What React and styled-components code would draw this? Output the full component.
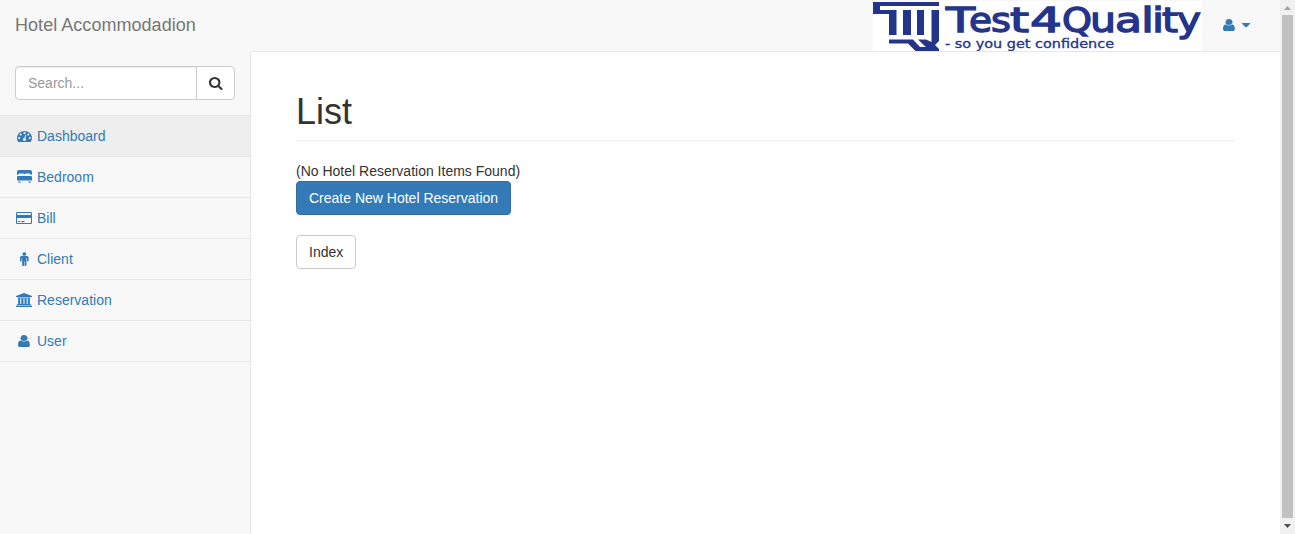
import React from "react";
import styled, { createGlobalStyle } from "styled-components";

const Global = createGlobalStyle`
  *, *::before, *::after { box-sizing: border-box; }
  html, body { margin: 0; height: 100%; overflow: hidden; }
  body {
    font: 14px/20px "Liberation Sans", Arial, sans-serif;
    color: #333;
    background: #f8f8f8;
  }
`;

const Screen = styled.div`
  display: flex;
  height: 534px;
`;
const Page = styled.div`
  flex: 1;
  min-width: 0;
  display: flex;
  flex-direction: column;
`;
const Navbar = styled.header`
  flex: none;
  display: flex;
  height: 51px;
  justify-content: space-between;
`;
const Brand = styled.a`
  padding: 15px;
  font-size: 18px;
  line-height: 20px;
  letter-spacing: 0.04px;
  color: #777;
`;
const NavRight = styled.div`
  display: flex;
  align-items: flex-start;
  padding-right: 15px;
`;
const LogoSvg = styled.svg`
  display: block;
  width: 329px;
  height: 50px;
  margin-top: 1px;
  background: #fff;
`;
const UserMenu = styled.a`
  display: flex;
  align-items: center;
  gap: 4px;
  height: 50px;
  padding-left: 18px;
  padding-right: 15px;
  color: #337ab7;
`;
const Body = styled.div`
  flex: 1;
  min-height: 0;
  display: flex;
`;
const Sidebar = styled.nav`
  flex: none;
  width: 250px;
`;
const SearchRow = styled.div`
  display: flex;
  padding: 15px;
  border-bottom: 1px solid #e7e7e7;
`;
const SearchInput = styled.input`
  flex: 1;
  min-width: 0;
  height: 34px;
  padding: 6px 12px;
  font: inherit;
  border: 1px solid #ccc;
  border-radius: 4px 0 0 4px;
  background: #fff;
  box-shadow: inset 0 1px 1px rgba(0, 0, 0, 0.075);
  &::placeholder { color: #999; }
`;
const SearchButton = styled.button`
  display: flex;
  align-items: center;
  justify-content: center;
  width: 39px;
  height: 34px;
  margin-left: -1px;
  padding: 0;
  border: 1px solid #ccc;
  border-radius: 0 4px 4px 0;
  background: #fff;
  color: #333;
`;
const NavItem = styled.a`
  display: flex;
  align-items: center;
  gap: 4px;
  height: 41px;
  padding: 0 15px;
  border-bottom: 1px solid #e7e7e7;
  color: #337ab7;
  background: ${(p) => (p.$active ? "#eee" : "transparent")};
`;
const IconSlot = styled.span`
  display: flex;
  justify-content: center;
  width: 18px;
`;
const Glyph = styled.svg`
  display: block;
  flex: none;
  height: 14px;
  overflow: visible;
  fill: currentColor;
`;
const Main = styled.main`
  flex: 1;
  padding: 0 45px;
  background: #fff;
  border-left: 1px solid #e7e7e7;
  border-top: 1px solid #e7e7e7;
`;
const Title = styled.h1`
  margin: 40px 0 20px;
  padding-bottom: 9px;
  border-bottom: 1px solid #eee;
  font-size: 36px;
  font-weight: 400;
  line-height: 39px;
`;
const Button = styled.button`
  display: block;
  height: 34px;
  padding: 6px 12px;
  font: inherit;
  border-radius: 4px;
  border: 1px solid ${(p) => (p.$primary ? "#2e6da4" : "#ccc")};
  background: ${(p) => (p.$primary ? "#337ab7" : "#fff")};
  color: ${(p) => (p.$primary ? "#fff" : "#333")};
  margin-bottom: 20px;
`;
const ScrollTrack = styled.div`
  flex: none;
  width: 15px;
  display: flex;
  flex-direction: column;
  align-items: center;
  background: #f1f1f1;
`;
const ScrollEnd = styled.svg`
  display: block;
  width: 15px;
  height: ${(p) => p.$h}px;
  fill: ${(p) => p.$tone};
`;
const ScrollThumb = styled.div`
  flex: 1;
  width: 11px;
  background: #c1c1c1;
`;

const ICONS = {
  user: [1408, "M1344 1399q0 109-62.5 187t-150.5 78h-918q-88 0-150.500-78t-62.500-187q0-85 8.500-160.500t31.500-152 58.500-131 94-89 134.500-34.500q131 128 345 128t345-128q76 0 134.500 34.500t94 89 58.500 131 31.500 152 8.500 160.500zm-256-887q0 159-112.500 271.500t-303.500 112.500-303.500-112.500-80.500-271.500 112.500-271.500 271.500-112.500 303.500 112.500 112.500 271.500z"],
  search: [1664, "M1152 832q0-185-131.5-316.5t-316.5-131.5-316.5 131.5-131.5 316.5 131.5 316.5 316.5 131.5 316.5-131.5 131.5-316.5zm512 832q0 52-38 90t-90 38q-54 0-90-38l-343-342q-179 124-399 124-143 0-273.5-55.5t-225-150-150-225-55.5-273.5 55.5-273.5 150-225 225-150 273.5-55.5 273.5 55.5 225 150 150 225 55.5 273.5q0 220-124 399l343 343q37 37 37 90z"],
  dashboard: [1792, "M384 1152q0-53-37.5-90.5t-90.5-37.5-90.5 37.5-37.5 90.5 37.5 90.5 90.5 37.5 90.5-37.5 37.5-90.5zm192-448q0-53-37.5-90.5t-90.5-37.5-90.5 37.5-37.5 90.5 37.5 90.5 90.5 37.5 90.5-37.5 37.5-90.5zm428 481l101-382q6-26-7.5-48.5t-38.5-29.5-48 6.5-30 39.5l-101 382q-60 5-107 43.5t-63 98.5q-20 77 20 146t117 89 146-20 89-117q16-60-6-117t-72-91zm660-33q0-53-37.5-90.5t-90.5-37.5-90.5 37.5-37.5 90.5 37.5 90.5 90.5 37.5 90.5-37.5 37.5-90.5zm-640-640q0-53-37.5-90.5t-90.5-37.5-90.5 37.5-37.5 90.5 37.5 90.5 90.5 37.5 90.5-37.5 37.5-90.5zm448 192q0-53-37.5-90.5t-90.5-37.5-90.5 37.5-37.5 90.5 37.5 90.5 90.5 37.5 90.5-37.5 37.5-90.5zm320 448q0 261-141 483-19 29-54 29h-1402q-35 0-54-29-141-221-141-483 0-182 71-348t191-286 286-191 348-71 348 71 286 191 191 286 71 348z"],
  bed: [1792, "M0 620V256Q0 0 220 0H1572Q1792 0 1792 256V620H1640Q1600 440 1450 440H1050Q940 440 896 580Q852 440 742 440H342Q192 440 152 620ZM0 930Q0 768 132 768H1660Q1792 768 1792 930V1344H0ZM128 1472H448L384 1640H200ZM1344 1472H1664L1592 1640H1408Z"],
  card: [1920, "M1760 128q66 0 113 47t47 113v1216q0 66-47 113t-113 47h-1600q-66 0-113-47t-47-113v-1216q0-66 47-113t113-47h1600zm-1600 128q-13 0-22.5 9.5t-9.5 22.5v224h1664v-224q0-13-9.5-22.5t-22.5-9.5h-1600zm1600 1280q13 0 22.5-9.5t9.5-22.5v-608h-1664v608q0 13 9.5 22.5t22.5 9.5h1600zm-1504-128v-128h256v128h-256zm384 0v-128h384v128h-384z"],
  male: [1024, "M1024 704v416q0 40-28 68t-68 28-68-28-28-68v-352h-64v912q0 46-33 79t-79 33-79-33-33-79v-464h-64v464q0 46-33 79t-79 33-79-33-33-79v-912h-64v352q0 40-28 68t-68 28-68-28-28-68v-416q0-80 56-136t136-56h640q80 0 136 56t56 136zm-288-448q0 93-65.5 158.5t-158.5 65.5-158.5-65.5-65.5-158.5 65.5-158.5 158.5-65.5 158.5 65.5 65.5 158.5z"],
  bank: [1920, "M960 0l960 384v128h-128q0 26-20.5 45t-48.5 19h-1526q-28 0-48.5-19t-20.5-45h-128v-128zm-704 640h256v768h128v-768h256v768h128v-768h256v768h128v-768h256v768h59q28 0 48.5 19t20.5 45v64h-1664v-64q0-26 20.5-45t48.5-19h59v-768zm1595 960q28 0 48.5 19t20.5 45v128h-1920v-128q0-26 20.5-45t48.5-19h1782z"],
  caret: [1024, "M1056 704q0 26-19 45l-464 448q-19 19-45 19t-61-19l-464-448q-19-19-19-45t19-45 45-19h944q26 0 45 19t19 45z"],
};

/* Rendered widths in pixels; a glyph without one keeps its natural width. */
const WIDTHS = { card: 16, bank: 16, dashboard: 15, bed: 15, male: 8.6, user: 12.4, search: 13.5 };

function Icon({ name }) {
  const [w, d] = ICONS[name];
  return (
    <Glyph width={WIDTHS[name] || w / 128} viewBox={`0 0 ${w} 1792`} preserveAspectRatio="none" aria-hidden="true">
      <path d={d} />
    </Glyph>
  );
}

const WORDMARK = [
  ["T", 946, 29],
  ["e", 969, 23],
  ["s", 991, 20],
  ["t", 1010, 19],
  ["4", 1030, 32],
  ["Q", 1062, 30],
  ["u", 1090, 26],
  ["a", 1115, 27],
  ["l", 1141, 13],
  ["i", 1152, 12],
  ["t", 1162, 16],
  ["y", 1177, 24],
];

function Logo() {
  return (
    <LogoSvg viewBox="873 1 329 50" role="img" aria-label="Test4Quality">
      <g fill="#24348b">
        <path d="M873 2H939V6H880V10H896.500V35H889V14H873Z" />
        <path d="M903 10H911V35H903ZM917 10H924V35H917ZM931.500 10H939V41L935 45L939 49V51H930L918 39.500H926L931.500 42Z" />
        <path d="M889 39.500H913L920 47H930L934 51H915.500L908 43.500H889Z" />
        <text y="32" fontFamily="DejaVu Sans" fontSize="34" stroke="#24348b" strokeWidth="1.300">
          {WORDMARK.map(([ch, x, w]) => (
            <tspan key={x} x={x} textLength={w} lengthAdjust="spacingAndGlyphs">{ch}</tspan>
          ))}
        </text>
        <text x="945" y="48" fontFamily="DejaVu Sans" fontSize="11.500" textLength="169" lengthAdjust="spacingAndGlyphs" stroke="#24348b" strokeWidth=".3">- so you get confidence</text>
      </g>
    </LogoSvg>
  );
}

const LINKS = [
  ["dashboard", "Dashboard"],
  ["bed", "Bedroom"],
  ["card", "Bill"],
  ["male", "Client"],
  ["bank", "Reservation"],
  ["user", "User"],
];

export default function App() {
  return (
    <Screen>
      <Global />
      <Page>
        <Navbar>
          <Brand>Hotel Accommodadion</Brand>
          <NavRight>
            <Logo />
            <UserMenu>
              <IconSlot><Icon name="user" /></IconSlot>
              <Icon name="caret" />
            </UserMenu>
          </NavRight>
        </Navbar>
        <Body>
          <Sidebar>
            <SearchRow>
              <SearchInput placeholder="Search..." />
              <SearchButton aria-label="Search"><Icon name="search" /></SearchButton>
            </SearchRow>
            {LINKS.map(([icon, label], i) => (
              <NavItem key={label} $active={i === 0}>
                <IconSlot><Icon name={icon} /></IconSlot>
                {label}
              </NavItem>
            ))}
          </Sidebar>
          <Main>
            <Title>List</Title>
            <div>(No Hotel Reservation Items Found)</div>
            <Button $primary>Create New Hotel Reservation</Button>
            <Button>Index</Button>
          </Main>
        </Body>
      </Page>
      <ScrollTrack>
        <ScrollEnd $h={15} $tone="#a3a3a3" viewBox="0 0 15 15"><path d="M4 10L7.500 6L11 10Z" /></ScrollEnd>
        <ScrollThumb />
        <ScrollEnd $h={16} $tone="#505050" viewBox="0 0 15 16"><path d="M4 6L7.500 10L11 6Z" /></ScrollEnd>
      </ScrollTrack>
    </Screen>
  );
}
